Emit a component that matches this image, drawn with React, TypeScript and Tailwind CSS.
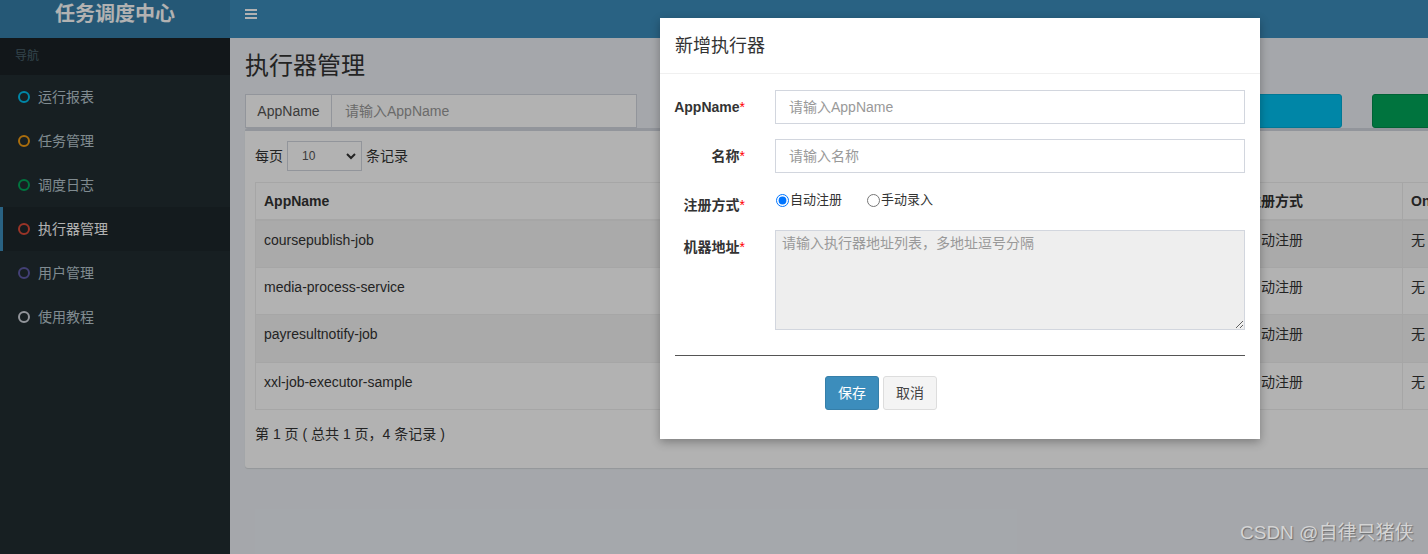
import React from "react";

const items = [
  { label: "运行报表", color: "border-[#00c0ef]", active: false },
  { label: "任务管理", color: "border-[#f39c12]", active: false },
  { label: "调度日志", color: "border-[#00a65a]", active: false },
  { label: "执行器管理", color: "border-[#dd4b39]", active: true },
  { label: "用户管理", color: "border-[#605ca8]", active: false },
  { label: "使用教程", color: "border-[#d2d6de]", active: false },
];

const rows = [
  { app: "coursepublish-job", name: "课程发布执行器" },
  { app: "media-process-service", name: "媒资处理执行器" },
  { app: "payresultnotify-job", name: "支付结果通知执行器" },
  { app: "xxl-job-executor-sample", name: "示例执行器" },
];

function Label({ text }: { text: string }) {
  return (
    <div className="flex w-[70px] shrink-0 justify-end whitespace-nowrap pt-[7px] leading-[20px] font-bold text-[#333]">
      <span>{text}</span>
      <span className="text-[#ff0000] font-normal">*</span>
    </div>
  );
}

export default function App() {
  return (
    <div className="relative w-[1428px] h-[554px] overflow-hidden bg-[#ecf0f5] text-[14px] text-[#333] [font-family:'Liberation_Sans','Noto_Sans_CJK_SC',sans-serif]">
      {/* header */}
      <header className="flex h-[38px]">
        <div className="w-[230px] shrink-0 bg-[#367fa9] text-white text-[20px] font-bold leading-[28px] text-center">
          任务调度中心
        </div>
        <div className="flex-1 bg-[#3c8dbc] pl-[15px] pt-[9px]">
          <svg width="12" height="10" viewBox="0 0 12 10" className="block">
            <rect x="0" y="0" width="12" height="2" fill="#fff" />
            <rect x="0" y="4" width="12" height="2" fill="#fff" />
            <rect x="0" y="8" width="12" height="2" fill="#fff" />
          </svg>
        </div>
      </header>

      <div className="flex h-[516px]">
        {/* sidebar */}
        <aside className="w-[230px] shrink-0 bg-[#222d32]">
          <div className="h-[37px] bg-[#1a2226] pl-[15px] text-[12px] leading-[37px] text-[#4b646f]">导航</div>
          {items.map((it) => (
            <div
              key={it.label}
              className={
                it.active
                  ? "flex h-[44px] items-center border-l-[3px] border-[#3c8dbc] bg-[#1e282c] pl-[15px] text-white"
                  : "flex h-[44px] items-center border-l-[3px] border-transparent pl-[15px] text-[#b8c7ce]"
              }
            >
              <span className={"block w-[12px] h-[12px] rounded-full border-[2px] " + it.color} />
              <span className="ml-[8px] leading-[20px]">{it.label}</span>
            </div>
          ))}
        </aside>

        {/* main */}
        <main className="flex-1 min-w-0 overflow-hidden px-[15px]">
          <h1 className="pt-[13px] text-[24px] leading-[30px] font-normal text-[#333]">执行器管理</h1>

          <div className="mt-[13px] flex h-[34px] w-[1700px]">
            <div className="flex w-[392px] shrink-0">
              <div className="w-[87px] shrink-0 border border-[#d2d6de] bg-white text-[#555] leading-[32px] text-center">AppName</div>
              <div className="flex-1 border border-l-0 border-[#d2d6de] bg-white pl-[13px] leading-[32px] text-[#999]">请输入AppName</div>
            </div>
            <div className="ml-[30px] flex w-[392px] shrink-0">
              <div className="w-[60px] shrink-0 border border-[#d2d6de] bg-white text-[#555] leading-[32px] text-center">名称</div>
              <div className="flex-1 border border-l-0 border-[#d2d6de] bg-white pl-[13px] leading-[32px] text-[#999]">请输入名称</div>
            </div>
            <div className="ml-[30px] w-[253px] shrink-0 rounded-[3px] border border-[#00acd6] bg-[#00c0ef] text-white leading-[32px] text-center">搜索</div>
            <div className="ml-[30px] w-[253px] shrink-0 rounded-[3px] border border-[#008d4c] bg-[#00a65a] text-white leading-[32px] text-center">+新增</div>
          </div>

          <div className="w-[1500px] h-[340px] rounded-[3px] border-t-[3px] border-[#d2d6de] bg-white px-[10px] pt-[10px] shadow-[0_1px_1px_rgba(0,0,0,0.1)]">
            <div className="flex items-center h-[30px]">
              <span className="leading-[20px]">每页</span>
              <div className="ml-[4px] flex h-[30px] w-[75px] items-center border border-[#d2d6de] bg-white pl-[14px] pr-[4px]">
                <span className="text-[12px] text-[#555] leading-[16px]">10</span>
                <svg width="10" height="7" viewBox="0 0 10 7" className="ml-auto mr-[1px]">
                  <polyline points="1,1 5,5 9,1" fill="none" stroke="#333" strokeWidth="2" />
                </svg>
              </div>
              <span className="ml-[4px] leading-[20px]">条记录</span>
            </div>

            <table className="mt-[11px] table-fixed border-collapse w-[1500px] border border-[#eeeeee]">
              <colgroup>
                <col className="w-[420px]" />
                <col className="w-[563px]" />
                <col className="w-[164px]" />
                <col className="w-[200px]" />
                <col />
              </colgroup>
              <thead>
                <tr className="h-[37px] border-b-2 border-[#eeeeee] text-left">
                  <th className="px-[8px] font-bold leading-[20px] border-r border-[#eeeeee]">AppName</th>
                  <th className="px-[8px] font-bold leading-[20px] border-r border-[#eeeeee]">名称</th>
                  <th className="px-[8px] font-bold leading-[20px] border-r border-[#eeeeee]">注册方式</th>
                  <th className="px-[8px] font-bold leading-[20px] border-r border-[#eeeeee]">OnLine 机器地址</th>
                  <th className="px-[8px] font-bold leading-[20px]">操作</th>
                </tr>
              </thead>
              <tbody>
                {rows.map((r, i) => (
                  <tr key={r.app} className={i % 2 === 0 ? "h-[47.5px] border-b border-[#eeeeee] bg-[#f4f4f4]" : "h-[47.5px] border-b border-[#eeeeee] bg-white"}>
                    <td className="px-[8px] pt-[9px] align-top leading-[20px] border-r border-[#eeeeee]">{r.app}</td>
                    <td className="px-[8px] pt-[9px] align-top leading-[20px] border-r border-[#eeeeee]">{r.name}</td>
                    <td className="px-[8px] pt-[9px] align-top leading-[20px] border-r border-[#eeeeee]">自动注册</td>
                    <td className="px-[8px] pt-[9px] align-top leading-[20px] border-r border-[#eeeeee]">无</td>
                    <td className="px-[8px] pt-[9px] align-top leading-[20px]">操作</td>
                  </tr>
                ))}
              </tbody>
            </table>

            <div className="mt-[14px] leading-[20px]">第 1 页 ( 总共 1 页，4 条记录 )</div>
          </div>
        </main>
      </div>

      {/* backdrop */}
      <div className="absolute inset-0 bg-black/30" />

      {/* modal */}
      <div className="absolute left-[660px] top-[18px] w-[600px] h-[421px] bg-white shadow-[0_3px_9px_rgba(0,0,0,0.3)]">
        <div className="border-b border-[#f0f0f0] px-[15px] pt-[15px] pb-[14px]">
          <div className="text-[18px] leading-[26px] text-[#333]">新增执行器</div>
        </div>
        <div className="px-[15px] pt-[16px]">
          <div className="flex">
            <Label text="AppName" />
            <div className="ml-[30px] h-[34px] w-[470px] border border-[#d2d6de] pl-[13px] leading-[32px] text-[#999]">请输入AppName</div>
          </div>
          <div className="mt-[15px] flex">
            <Label text="名称" />
            <div className="ml-[30px] h-[34px] w-[470px] border border-[#d2d6de] pl-[13px] leading-[32px] text-[#999]">请输入名称</div>
          </div>
          <div className="mt-[15px] flex h-[27px]">
            <Label text="注册方式" />
            <div className="ml-[31px] flex items-center h-[24px] text-[13px] text-[#333]">
              <input type="radio" name="reg" defaultChecked className="m-0 w-[13px] h-[13px]" />
              <span className="ml-[1px] leading-[20px]">自动注册</span>
              <input type="radio" name="reg" className="ml-[25px] m-0 w-[13px] h-[13px]" />
              <span className="ml-[1px] leading-[20px]">手动录入</span>
            </div>
          </div>
          <div className="mt-[15px] flex">
            <Label text="机器地址" />
            <textarea
              readOnly
              placeholder="请输入执行器地址列表，多地址逗号分隔"
              className="ml-[30px] block h-[100px] w-[470px] border border-[#d2d6de] bg-[#eeeeee] px-[6px] pt-[2px] text-[14px] leading-[20px] text-[#555] placeholder:text-[#999] outline-none"
            />
          </div>
          <div className="mt-[25px] w-[570px] border-t border-[#555]" />
          <div className="mt-[20px] flex pl-[150px]">
            <div className="h-[34px] w-[54px] rounded-[3px] border border-[#367fa9] bg-[#3c8dbc] text-center leading-[32px] text-white">保存</div>
            <div className="ml-[4px] h-[34px] w-[54px] rounded-[3px] border border-[#dddddd] bg-[#f4f4f4] text-center leading-[32px] text-[#444]">取消</div>
          </div>
        </div>
      </div>

      {/* watermark */}
      <div className="absolute left-[1240px] top-[522px] text-[19px] leading-[22px] text-[#d4d4d4] [text-shadow:1px_1px_1px_rgba(0,0,0,0.35)]">
        CSDN @自律只猪侠
      </div>
    </div>
  );
}
